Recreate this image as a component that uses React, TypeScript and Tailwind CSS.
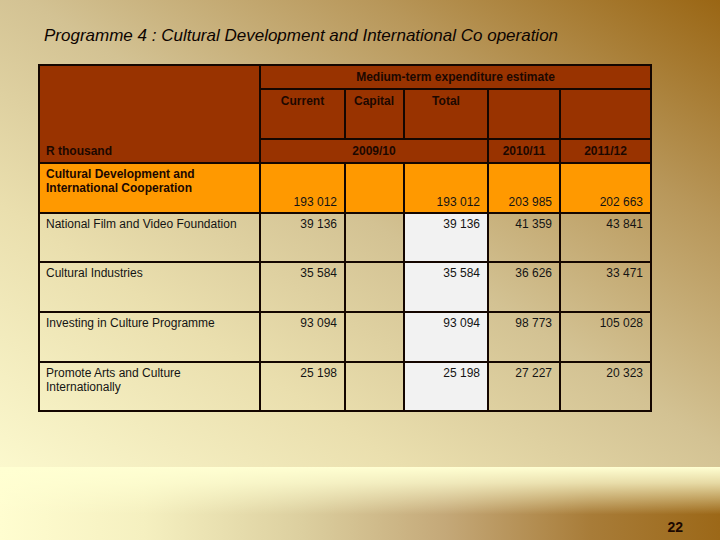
import React from "react";

const rows = [
  { name: "National Film and Video Foundation", current: "39 136", total: "39 136", y2: "41 359", y3: "43 841", h: "h-[49px]" },
  { name: "Cultural Industries", current: "35 584", total: "35 584", y2: "36 626", y3: "33 471", h: "h-[50px]" },
  { name: "Investing in Culture Programme", current: "93 094", total: "93 094", y2: "98 773", y3: "105 028", h: "h-[50px]" },
  { name: "Promote Arts and Culture", name2: "Internationally", current: "25 198", total: "25 198", y2: "27 227", y3: "20 323", h: "h-[49px]" },
];

const cell = "border-2 border-[#140600] p-0";

const App = () => {
  return (
    <div className="w-[720px] h-[540px] flex flex-col overflow-hidden font-['Liberation_Sans',Arial,sans-serif] text-[#141414]">
      {/* Slide body */}
      <div className="flex-1 bg-[linear-gradient(to_top_right,#fbf8cd_0%,#eadfae_28%,#d3c293_52%,#b8975a_76%,#9a6614_100%)] pl-[38px]">
        <h1 className="ml-[6px] mt-[26px] text-[17px] italic leading-[20px] text-[#0d0400]">
          Programme 4 : Cultural Development and International Co operation
        </h1>

        <table className="mt-[18px] w-[613px] table-fixed border-collapse text-[12px] leading-[14px]">
          <colgroup>
            <col className="w-[221px]" />
            <col className="w-[85px]" />
            <col className="w-[59px]" />
            <col className="w-[84px]" />
            <col className="w-[72px]" />
            <col className="w-[91px]" />
          </colgroup>
          <thead className="bg-[#993300] font-bold text-[#1c0800]">
            <tr className="h-[24px]">
              <td rowSpan={3} className={`${cell} align-bottom pl-[6px] pb-[4px]`}>
                R thousand
              </td>
              <td colSpan={5} className={`${cell} text-center`}>
                Medium-term expenditure estimate
              </td>
            </tr>
            <tr className="h-[50px]">
              <td className={`${cell} align-top pt-[4px] text-center`}>Current</td>
              <td className={`${cell} align-top pt-[4px] pl-[8px]`}>Capital</td>
              <td className={`${cell} align-top pt-[4px] text-center`}>Total</td>
              <td className={cell}></td>
              <td className={cell}></td>
            </tr>
            <tr className="h-[24px]">
              <td colSpan={3} className={`${cell} text-center`}>2009/10</td>
              <td className={`${cell} text-center`}>2010/11</td>
              <td className={`${cell} text-center`}>2011/12</td>
            </tr>
          </thead>
          <tbody>
            <tr className="h-[50px] bg-[#ff9900]">
              <td className={`${cell} align-top pl-[6px] pt-[3px] font-bold text-[#1c0800]`}>
                Cultural Development and
                <br />
                International Cooperation
              </td>
              <td className={`${cell} align-bottom text-right pr-[7px] pb-[3px]`}>193 012</td>
              <td className={cell}></td>
              <td className={`${cell} align-bottom text-right pr-[7px] pb-[3px]`}>193 012</td>
              <td className={`${cell} align-bottom text-right pr-[7px] pb-[3px]`}>203 985</td>
              <td className={`${cell} align-bottom text-right pr-[7px] pb-[3px]`}>202 663</td>
            </tr>
            {rows.map((r) => (
              <tr key={r.name} className={r.h}>
                <td className={`${cell} align-top pl-[6px] pt-[3px]`}>
                  {r.name}
                  {r.name2 && (
                    <>
                      <br />
                      {r.name2}
                    </>
                  )}
                </td>
                <td className={`${cell} align-top text-right pr-[7px] pt-[3px]`}>{r.current}</td>
                <td className={cell}></td>
                <td className={`${cell} align-top text-right pr-[7px] pt-[3px] bg-[#f2f2f2]`}>{r.total}</td>
                <td className={`${cell} align-top text-right pr-[7px] pt-[3px]`}>{r.y2}</td>
                <td className={`${cell} align-top text-right pr-[7px] pt-[3px]`}>{r.y3}</td>
              </tr>
            ))}
          </tbody>
        </table>
      </div>

      {/* Footer band */}
      <div className="relative h-[73px] bg-[linear-gradient(to_bottom,#ffffd2_0%,rgba(255,255,210,0.75)_22%,rgba(255,255,210,0)_65%),linear-gradient(to_right,#fffdd0_0%,#f5f0c0_20%,#dccf9f_42%,#c4a878_62%,#a87c38_82%,#9c6818_100%)]">
        <div className="flex h-full items-end justify-end pr-[37px] pb-[4px]">
          <span className="text-[14px] font-bold leading-[18px] text-[#1c0800]">22</span>
        </div>
      </div>
    </div>
  );
};

export default App;
